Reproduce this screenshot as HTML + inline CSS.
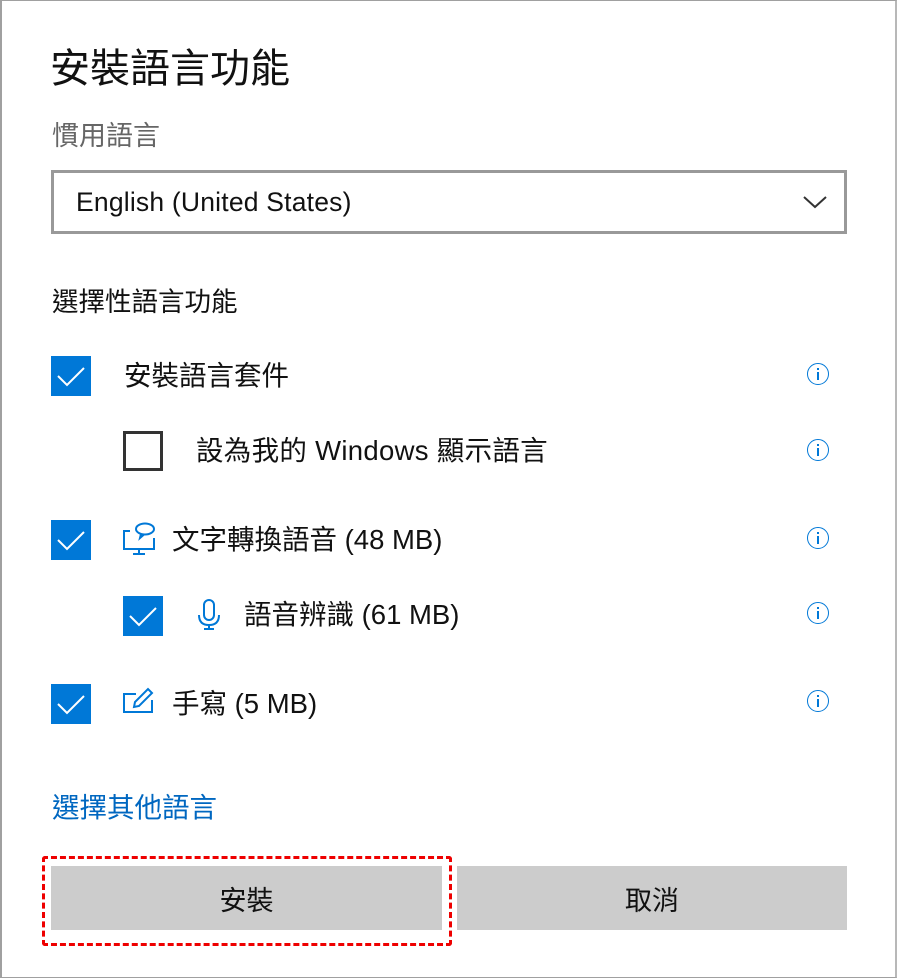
<!DOCTYPE html>
<html><head><meta charset="utf-8"><style>
html,body{margin:0;padding:0}
body{width:897px;height:979px;position:relative;background:#fff;overflow:hidden;font-family:"Liberation Sans","Noto Sans CJK TC",sans-serif;color:#111}
.frame{position:absolute;left:0;top:0;width:893px;height:976px;border:2px solid #a0a0a0;border-top-width:1px;border-bottom-width:1px;border-right:3px solid #b8b8b8}
.t{position:absolute;white-space:nowrap;line-height:1}
.cb{position:absolute;width:40px;height:40px;background:#0078d7}
.cb svg{position:absolute;left:0;top:0}
.ub{position:absolute;width:34px;height:34px;border:3px solid #333;background:#fff}
.info{position:absolute;width:22px;height:22px;border:1.5px solid #0078d7;border-radius:50%;box-sizing:border-box}
.info:before{content:"";position:absolute;left:8.5px;top:4px;width:2px;height:2px;background:#0078d7}
.info:after{content:"";position:absolute;left:8.5px;top:8px;width:2px;height:8px;background:#0078d7}
.btn{position:absolute;top:866px;height:64px;background:#ccc;font-size:27px;display:flex;align-items:center;justify-content:center}
</style></head><body>
<div class="frame"></div>
<div class="t" style="left:50px;top:49px;font-size:40px">安裝語言功能</div>
<div class="t" style="left:52px;top:123px;font-size:27px;color:#666">慣用語言</div>
<div style="position:absolute;left:51px;top:170px;width:790px;height:58px;border:3px solid #999"></div>
<div class="t" style="left:76px;top:189px;font-size:26.5px;letter-spacing:0.2px">English (United States)</div>
<svg style="position:absolute;left:802px;top:194px" width="26" height="16"><path d="M2 3 L13 13 L24 3" fill="none" stroke="#333" stroke-width="2"/></svg>
<div class="t" style="left:52px;top:289px;font-size:26.5px">選擇性語言功能</div>

<div class="cb" style="left:51px;top:356px"><svg width="40" height="40"><path d="M7 20 L16 29 L33 12" fill="none" stroke="#fff" stroke-width="2"/></svg></div>
<div class="t" style="left:124px;top:362px;font-size:27.5px">安裝語言套件</div>
<div class="info" style="left:807px;top:363px"></div>

<div class="ub" style="left:123px;top:431px"></div>
<div class="t" style="left:196px;top:437px;font-size:27.5px;letter-spacing:0.3px">設為我的 Windows 顯示語言</div>
<div class="info" style="left:807px;top:439px"></div>

<div class="cb" style="left:51px;top:520px"><svg width="40" height="40"><path d="M7 20 L16 29 L33 12" fill="none" stroke="#fff" stroke-width="2"/></svg></div>
<svg style="position:absolute;left:122px;top:522px" width="34" height="34" fill="none" stroke="#0078d7" stroke-width="2"><path d="M8 9 H2 V27 H32 V16"/><path d="M17 27 V32 M11 32 H23"/><ellipse cx="23" cy="7" rx="9" ry="5.5"/><path d="M19 12 L18 16 L22 12.5"/></svg>
<div class="t" style="left:172px;top:526px;font-size:27.5px">文字轉換語音 (48 MB)</div>
<div class="info" style="left:807px;top:527px"></div>

<div class="cb" style="left:123px;top:596px"><svg width="40" height="40"><path d="M7 20 L16 29 L33 12" fill="none" stroke="#fff" stroke-width="2"/></svg></div>
<svg style="position:absolute;left:196px;top:598px" width="26" height="34" fill="none" stroke="#0078d7" stroke-width="2"><rect x="8" y="2" width="10" height="20" rx="5"/><path d="M3 17 Q3 27 13 27 Q23 27 23 17 M13 27 V31 M8 31 H18"/></svg>
<div class="t" style="left:244px;top:601px;font-size:27.5px">語音辨識 (61 MB)</div>
<div class="info" style="left:807px;top:602px"></div>

<div class="cb" style="left:51px;top:684px"><svg width="40" height="40"><path d="M7 20 L16 29 L33 12" fill="none" stroke="#fff" stroke-width="2"/></svg></div>
<svg style="position:absolute;left:122px;top:686px" width="34" height="30" fill="none" stroke="#0078d7" stroke-width="2"><path d="M14 8 H2 V26 H30 V14"/><path d="M12 21 L13 16 L26 3 L30 7 L17 20 Z"/></svg>
<div class="t" style="left:172px;top:690px;font-size:27.5px">手寫 (5 MB)</div>
<div class="info" style="left:807px;top:690px"></div>

<div class="t" style="left:52px;top:794px;font-size:27.5px;color:#0067c0">選擇其他語言</div>

<div class="btn" style="left:51px;width:391px">安裝</div>
<div class="btn" style="left:457px;width:390px">取消</div>
<div style="position:absolute;left:42px;top:856px;width:404px;height:84px;border:3px dashed #e00;border-radius:3px"></div>
</body></html>
